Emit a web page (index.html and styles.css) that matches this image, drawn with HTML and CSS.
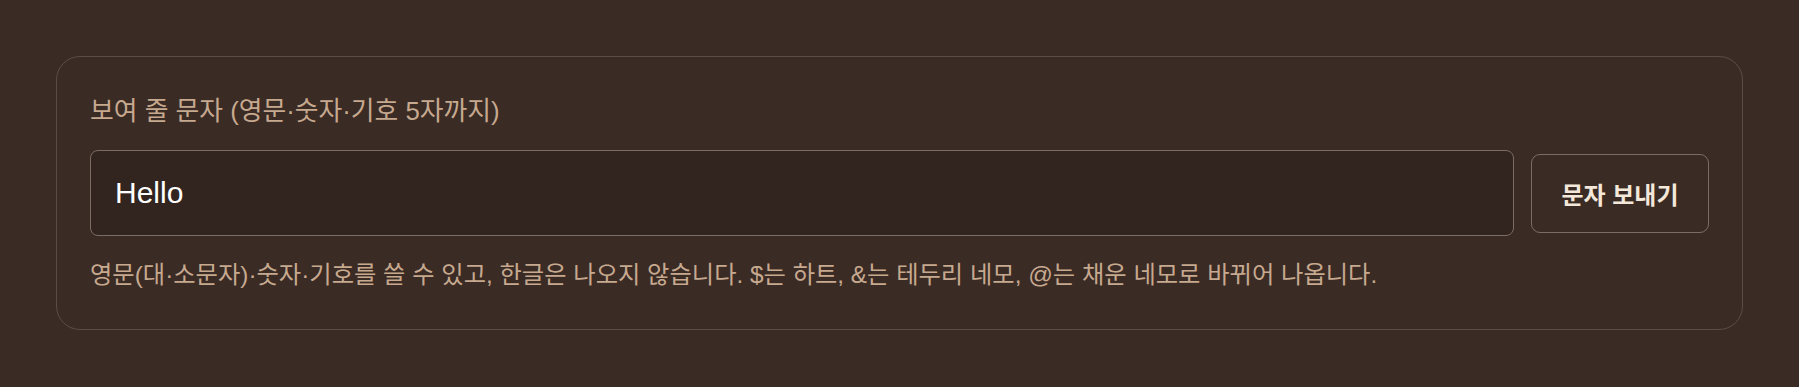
FILE: index.html
```html
<!DOCTYPE html>
<html lang="ko">
<head>
    <meta charset="UTF-8">
    <meta name="viewport" content="width=device-width, initial-scale=1.0">
    <title>문자 보내기</title>
    <link rel="stylesheet" href="styles.css">
</head>

<body>
    <main class="send-card">
        <label class="field-label" for="message">보여 줄 문자 (영문·숫자·기호 5자까지)</label>
        <div class="input-row">
            <input type="text" id="message" class="message-input" value="Hello" maxlength="5">
            <button class="button-send">문자 보내기</button>
        </div>
        <p class="field-help">영문(대·소문자)·숫자·기호를 쓸 수 있고, 한글은 나오지 않습니다. $는 하트, &amp;는 테두리 네모, @는 채운 네모로 바뀌어 나옵니다.</p>
    </main>
</body>
</html>
```

FILE: styles.css
```css
:root {
    --color-bg: #3b2b25;
    --color-input: #32251f;
    --color-card-border: #5b4d45;
    --color-field-border: #7a6d63;
    --color-label: #c6a98f;
    --color-button-text: #f3e8da;
    --color-white: #FFFFFF;
}

* {
    margin: 0;
    padding: 0;
    box-sizing: border-box;
}

body {
    background-color: var(--color-bg);
    font-family: "Liberation Sans", "Noto Sans CJK KR", sans-serif;
    padding: 56px;
}

.send-card {
    display: flex;
    flex-direction: column;
    gap: 22px;
    padding: 37px 33px;
    border: 1.5px solid var(--color-card-border);
    border-radius: 24px;
}

.field-label {
    font-size: 25.8px;
    line-height: 34px;
    color: var(--color-label);
}

.field-help {
    font-size: 24.3px;
    line-height: 34px;
    color: var(--color-label);
}

.input-row {
    display: flex;
    align-items: center;
    gap: 17px;
}

.message-input {
    flex: 1;
    height: 86px;
    padding: 0 24px;
    background-color: var(--color-input);
    border: 1.5px solid var(--color-field-border);
    border-radius: 8px;
    color: var(--color-white);
    font-family: inherit;
    font-size: 30px;
}

.message-input:focus {
    outline: none;
}

.button-send {
    width: 178px;
    height: 79px;
    background-color: transparent;
    border: 1.5px solid var(--color-field-border);
    border-radius: 9px;
    color: var(--color-button-text);
    font-family: inherit;
    font-size: 24px;
    font-weight: 700;
    cursor: pointer;
}
```
